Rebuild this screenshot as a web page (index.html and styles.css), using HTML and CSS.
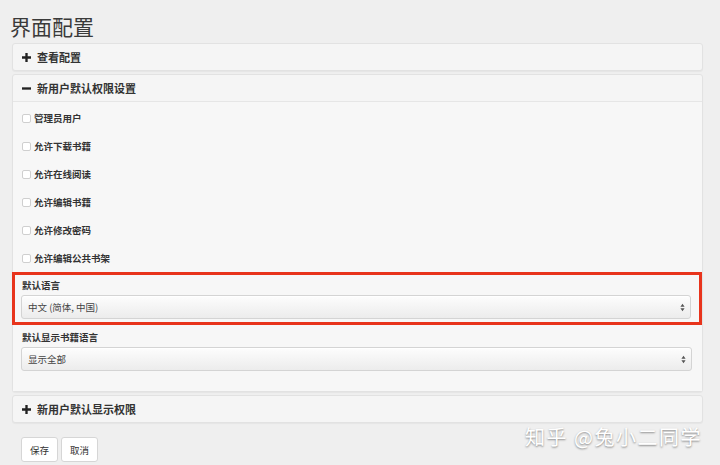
FILE: index.html
```html
<!DOCTYPE html>
<html lang="zh">
<head>
    <meta charset="UTF-8">
    <meta name="viewport" content="width=device-width, initial-scale=1.0">
    <title>界面配置</title>
    <link rel="stylesheet" href="styles.css">
</head>
<body>

<div class="container">
    <h1>界面配置</h1>

    <!-- 查看配置 -->
    <div class="panel">
        <div class="panel-heading">
            <svg class="icon" viewBox="0 0 10 10"><path d="M3.7 0h2.6v3.7H10v2.6H6.3V10H3.7V6.3H0V3.7h3.7z"/></svg>
            <span>查看配置</span>
        </div>
    </div>

    <!-- 新用户默认权限设置 -->
    <div class="panel">
        <div class="panel-heading">
            <svg class="icon" viewBox="0 0 10 10"><path d="M0 3.7h10v2.6H0z"/></svg>
            <span>新用户默认权限设置</span>
        </div>
        <div class="panel-body">
            <div class="checkbox"><span class="box"></span>管理员用户</div>
            <div class="checkbox"><span class="box"></span>允许下载书籍</div>
            <div class="checkbox"><span class="box"></span>允许在线阅读</div>
            <div class="checkbox"><span class="box"></span>允许编辑书籍</div>
            <div class="checkbox"><span class="box"></span>允许修改密码</div>
            <div class="checkbox"><span class="box"></span>允许编辑公共书架</div>

            <div class="form-group highlight">
                <div class="label">默认语言</div>
                <div class="select">
                    <span>中文 (简体, 中国)</span>
                    <svg class="arrows" viewBox="0 0 6 10"><path d="M3 0.5L5.5 4H0.5z M3 9.5L0.5 6h5z"/></svg>
                </div>
            </div>

            <div class="form-group">
                <div class="label">默认显示书籍语言</div>
                <div class="select">
                    <span>显示全部</span>
                    <svg class="arrows" viewBox="0 0 6 10"><path d="M3 0.5L5.5 4H0.5z M3 9.5L0.5 6h5z"/></svg>
                </div>
            </div>
        </div>
    </div>

    <!-- 新用户默认显示权限 -->
    <div class="panel">
        <div class="panel-heading">
            <svg class="icon" viewBox="0 0 10 10"><path d="M3.7 0h2.6v3.7H10v2.6H6.3V10H3.7V6.3H0V3.7h3.7z"/></svg>
            <span>新用户默认显示权限</span>
        </div>
    </div>

    <div class="buttons">
        <button>保存</button>
        <button>取消</button>
    </div>
</div>

<div class="watermark">知乎 @兔小二同学</div>

</body>
</html>
```

FILE: styles.css
```css
body {
    font-family: "Noto Sans CJK SC", "Liberation Sans", sans-serif;
    background-color: #efefef;
    color: #333;
    margin: 0;
    padding: 0;
    position: relative;
    height: 465px;
    overflow: hidden;
}
.container {
    width: 691px;
    margin-left: 12px;
    padding-top: 12px;
}
h1 {
    font-size: 21px;
    font-weight: normal;
    line-height: 28px;
    margin: 0 0 3px -2px;
    color: #3a3a3a;
}
.panel {
    background: #f5f5f5;
    border: 1px solid #e2e2e2;
    border-radius: 3px;
    margin-bottom: 3px;
    box-shadow: 0 1px 1px rgba(0, 0, 0, 0.04);
}
.panel-heading {
    height: 26px;
    display: flex;
    align-items: center;
    padding-left: 9px;
    font-size: 11px;
    font-weight: bold;
    color: #333;
}
.panel-heading .icon {
    width: 9px;
    height: 9px;
    fill: #222;
    margin-right: 6px;
}
.panel-body {
    border-top: 1px solid #e6e6e6;
    background: #f7f7f7;
    padding: 2px 10px 20px 8px;
}
.checkbox {
    height: 28px;
    display: flex;
    align-items: center;
    font-size: 9.5px;
    font-weight: bold;
    color: #333;
}
.checkbox .box {
    width: 7px;
    height: 7px;
    border: 1px solid #cfcfcf;
    border-radius: 2px;
    background: #fff;
    margin: 0 3px 0 1px;
}
.form-group {
    margin-top: 5px;
}
.form-group.highlight {
    margin: 0 -10px 0 -9px;
    padding: 3px 8px 3px 6px;
    border: 3px solid #e8341c;
}
.label {
    font-size: 9.5px;
    font-weight: bold;
    line-height: 14px;
    margin-bottom: 3px;
    padding-left: 1px;
}
.select {
    height: 22px;
    border: 1px solid #d4d4d4;
    border-radius: 3px;
    background: linear-gradient(#fdfdfd, #ececec);
    box-shadow: inset 0 1px 0 #fff;
    display: flex;
    align-items: center;
    justify-content: space-between;
    padding: 0 5px 0 6px;
    font-size: 9.5px;
    color: #444;
}
.select .arrows {
    width: 5px;
    height: 9px;
    fill: #555;
}
.buttons {
    display: flex;
    gap: 3px;
    margin: 14px 0 0 9px;
}
.buttons button {
    font-family: inherit;
    font-size: 9.5px;
    color: #333;
    width: 37px;
    height: 25px;
    padding: 0;
    background: #fff;
    border: 1px solid #d6d6d6;
    border-radius: 3px;
}
.watermark {
    position: absolute;
    left: 525px;
    top: 422px;
    font-size: 20px;
    color: #fff;
    letter-spacing: 1.5px;
    text-shadow: 0 1px 2px rgba(0, 0, 0, 0.45);
}
```
